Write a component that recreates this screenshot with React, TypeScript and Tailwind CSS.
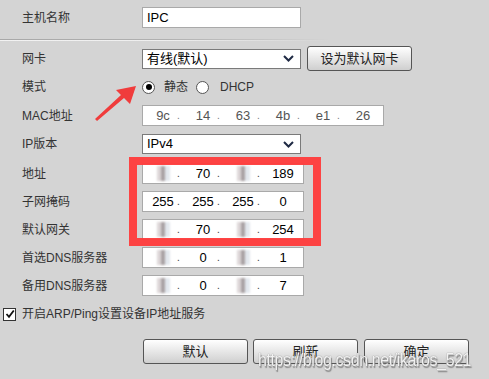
import React from 'react';

const font = { fontFamily: '"Liberation Sans", "Noto Sans CJK SC", sans-serif' };

function Blur() {
  return (
    <span className="inline-flex blur-[0.8px]">
      <span className="w-[4px] h-[15px] bg-[#ddd7d8]" />
      <span className="w-[4px] h-[15px] bg-[#a8a1a3]" />
      <span className="w-[5px] h-[15px] bg-[#e3e8ee]" />
    </span>
  );
}

function Seg({ v, dot, muted }: { v: React.ReactNode; dot: boolean; muted?: boolean }) {
  return (
    <div className="flex w-[40px] items-center">
      <span
        className={`w-[34px] pl-[6px] flex justify-center ${muted ? 'text-[#555]' : 'text-black'}`}
      >
        {v}
      </span>
      {dot && <span className={`w-[6px] text-[10px] ${muted ? 'text-[#777]' : 'text-[#333]'}`}>.</span>}
    </div>
  );
}

function IpBox({ parts, muted }: { parts: React.ReactNode[]; muted?: boolean }) {
  return (
    <div className="flex h-[21px] items-center bg-white border border-[#a9a9a9] text-[13px] leading-none">
      {parts.map((p, i) => (
        <Seg key={i} v={p} dot={i < parts.length - 1} muted={muted} />
      ))}
    </div>
  );
}

function Select({ text }: { text: string }) {
  return (
    <div className="flex w-[159px] h-[20px] items-center justify-between bg-white border border-[#7a7a7a] pl-[4px] pr-[6px] text-[13px] text-black">
      <span>{text}</span>
      <svg width="11" height="7" viewBox="0 0 11 7">
        <path d="M1 1 L5.5 5.5 L10 1" fill="none" stroke="#1f2a44" strokeWidth="2" />
      </svg>
    </div>
  );
}

function Row({ label, children, className }: { label: string; children: React.ReactNode; className: string }) {
  return (
    <div className={`flex items-center ${className}`}>
      <div className="w-[142px] shrink-0 pl-[22px] text-[12px] text-[#333]">{label}</div>
      {children}
    </div>
  );
}

function Btn({ children, className }: { children: React.ReactNode; className: string }) {
  return (
    <div
      className={`flex items-center justify-center h-[25px] rounded-[3px] border border-[#555] bg-gradient-to-b from-white to-[#cfcfcf] text-[13px] text-[#222] ${className}`}
    >
      {children}
    </div>
  );
}

export default function App() {
  return (
    <div className="relative w-[489px] h-[379px] bg-[#d4d4d4] overflow-hidden" style={font}>
      <div className="flex flex-col pt-[7px]">
        <Row label="主机名称" className="h-[21px]">
          <div className="w-[159px] h-[21px] bg-white border border-[#a9a9a9] pl-[4px] text-[13px] leading-[19px] text-black">
            IPC
          </div>
        </Row>

        <div className="mt-[11px] w-[330px] h-[2px] flex flex-col">
          <div className="h-px bg-gradient-to-r from-[#a8a8a8] via-[#b0b0b0] to-transparent" />
          <div className="h-px bg-gradient-to-r from-[#f2f2f2] via-[#eeeeee] to-transparent" />
        </div>

        <Row label="网卡" className="mt-[5px] h-[25px]">
          <Select text="有线(默认)" />
          <Btn className="ml-[6px] w-[105px] text-[12px]">设为默认网卡</Btn>
        </Row>

        <Row label="模式" className="mt-[3px] h-[26px]">
          <div className="flex items-center text-[12px] text-[#333]">
            <span className="w-[13px] h-[13px] rounded-full border border-[#555] bg-white flex items-center justify-center">
              <span className="w-[6px] h-[6px] rounded-full bg-black" />
            </span>
            <span className="ml-[9px]">静态</span>
            <span className="ml-[8px] w-[13px] h-[13px] rounded-full border border-[#555] bg-white" />
            <span className="ml-[11px]">DHCP</span>
          </div>
        </Row>

        <Row label="MAC地址" className="mt-[5px] h-[21px]">
          <IpBox parts={['9c', '14', '63', '4b', 'e1', '26']} muted />
        </Row>

        <Row label="IP版本" className="mt-[8px] h-[20px]">
          <Select text="IPv4" />
        </Row>

        <Row label="地址" className="mt-[9px] h-[21px]">
          <IpBox parts={[<Blur />, '70', <Blur />, '189']} />
        </Row>
        <Row label="子网掩码" className="mt-[7px] h-[21px]">
          <IpBox parts={['255', '255', '255', '0']} />
        </Row>
        <Row label="默认网关" className="mt-[7px] h-[21px]">
          <IpBox parts={[<Blur />, '70', <Blur />, '254']} />
        </Row>
        <Row label="首选DNS服务器" className="mt-[7px] h-[21px]">
          <IpBox parts={[<Blur />, '0', <Blur />, '1']} />
        </Row>
        <Row label="备用DNS服务器" className="mt-[7px] h-[21px]">
          <IpBox parts={[<Blur />, '0', <Blur />, '7']} />
        </Row>

        <div className="mt-[5px] h-[26px] flex items-center pl-[3px] text-[12px] text-[#333]">
          <span className="w-[13px] h-[13px] border border-[#333] bg-white flex items-center justify-center">
            <svg width="10" height="10" viewBox="0 0 10 10">
              <path d="M1.5 5 L4 7.8 L8.8 1.5" fill="none" stroke="#111" strokeWidth="1.8" />
            </svg>
          </span>
          <span className="ml-[6px]">开启ARP/Ping设置设备IP地址服务</span>
        </div>

        <div className="mt-[12px] flex pl-[143px] gap-[5px]">
          <Btn className="w-[105px]">默认</Btn>
          <Btn className="w-[105px]">刷新</Btn>
          <Btn className="w-[105px] ml-[1px]">确定</Btn>
        </div>
      </div>

      {/* red highlight box */}
      <div className="absolute left-[129px] top-[157px] w-[192px] h-[89px] border-[8px] border-[#ff3b3b]/95" />

      {/* red arrow */}
      <svg className="absolute left-0 top-0" width="489" height="379">
        <polygon
          points="136,86 116,90 121,95 95,119 97,121 124,98 130,104"
          fill="#f03c3c"
        />
      </svg>

      {/* watermark */}
      <div
        className="absolute left-[258px] top-[346px] text-[16px] tracking-[-0.4px] text-white/90 origin-top-left scale-y-[1.2]"
        style={{ textShadow: '0 0 1px #666, 1px 1px 1px #888' }}
      >
        https://blog.csdn.net/ikaros_521
      </div>
    </div>
  );
}
